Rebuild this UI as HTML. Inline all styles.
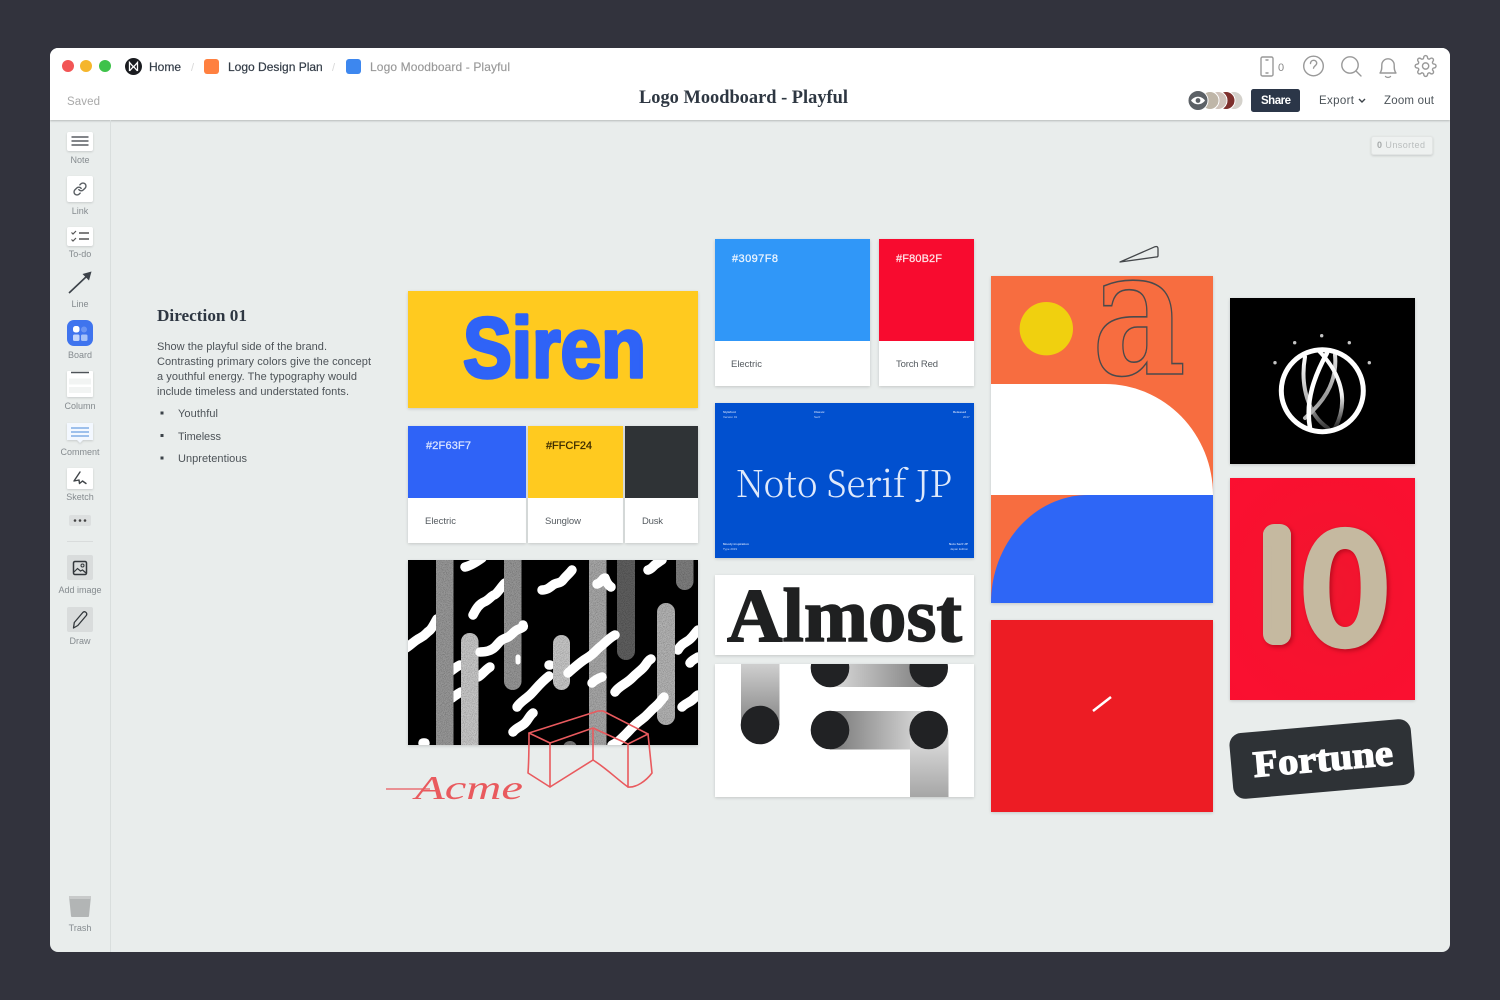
<!DOCTYPE html>
<html lang="en">
<head>
<meta charset="utf-8">
<title>Logo Moodboard - Playful</title>
<style>
html,body{margin:0;padding:0;width:1500px;height:1000px;overflow:hidden;background:#32333d}
#win{position:absolute;left:50px;top:48px;width:1400px;height:904px;background:#e9edec;border-radius:8px;overflow:hidden}
#hdr{position:absolute;left:0;top:0;width:1400px;height:72px;background:#fff;box-shadow:0 1px 2px rgba(0,0,0,.22)}
#side{position:absolute;left:60px;top:72px;width:1px;height:832px;background:#d9dedd}
.c{position:absolute;background:#fff;box-shadow:0 1px 3px rgba(0,0,0,.16)}
svg#art{position:absolute;left:0;top:0;width:1500px;height:1000px}
text{font-family:"Liberation Sans",sans-serif}
.l{font-size:9px;fill:#858b8f;text-anchor:middle}
.b{font-size:11px;fill:#4d5358}
.s{font-size:9.5px;fill:#555b60}
.h{font-size:11px;font-weight:400;stroke-width:.25px}
.ti{font-size:3px;fill:#c8d8f8}
.sc{filter:drop-shadow(0 1px 1px rgba(0,0,0,.14))}
</style>
</head>
<body>
<div id="win"><div id="hdr"></div><div id="side"></div></div>

<div class="c" style="left:408px;top:291px;width:290px;height:117px;background:#ffca1f"></div>
<div class="c" style="left:408px;top:426px;width:118px;height:117px"></div>
<div class="c" style="left:528px;top:426px;width:95px;height:117px"></div>
<div class="c" style="left:625px;top:426px;width:73px;height:117px"></div>
<div class="c" style="left:408px;top:426px;width:118px;height:72px;background:#2f63f7;box-shadow:none"></div>
<div class="c" style="left:528px;top:426px;width:95px;height:72px;background:#ffca1f;box-shadow:none"></div>
<div class="c" style="left:625px;top:426px;width:73px;height:72px;background:#2f3336;box-shadow:none"></div>
<div class="c" style="left:408px;top:560px;width:290px;height:185px;background:#000"></div>

<div class="c" style="left:715px;top:239px;width:155px;height:147px"></div>
<div class="c" style="left:879px;top:239px;width:95px;height:147px"></div>
<div class="c" style="left:715px;top:239px;width:155px;height:102px;background:#3097f8;box-shadow:none"></div>
<div class="c" style="left:879px;top:239px;width:95px;height:102px;background:#f80b2f;box-shadow:none"></div>
<div class="c" style="left:715px;top:403px;width:259px;height:155px;background:#0150cf"></div>
<div class="c" style="left:715px;top:575px;width:259px;height:80px"></div>
<div class="c" style="left:715px;top:664px;width:259px;height:133px"></div>

<div class="c" style="left:991px;top:276px;width:222px;height:327px;background:#f76d40"></div>
<div class="c" style="left:991px;top:620px;width:222px;height:192px;background:#ed1c24"></div>
<div class="c" style="left:1230px;top:298px;width:185px;height:166px;background:#000"></div>
<div class="c" style="left:1230px;top:478px;width:185px;height:222px;background:radial-gradient(ellipse at 55% 50%,#f0162e 0%,#f8112f 60%,#fb0f30 100%)"></div>

<svg id="art" viewBox="0 0 1500 1000" xmlns="http://www.w3.org/2000/svg">
<defs>
<clipPath id="pat"><rect x="408" y="560" width="290" height="185"/></clipPath>
<clipPath id="dots"><rect x="715" y="664" width="259" height="133"/></clipPath>
<clipPath id="one"><rect x="1263" y="524" width="28" height="121" rx="11"/></clipPath>
<filter id="g" x="0" y="0" width="100%" height="100%"><feTurbulence type="fractalNoise" baseFrequency="1.1" numOctaves="2" result="n"/><feColorMatrix in="n" type="matrix" values="0 0 0 0 0 0 0 0 0 0 0 0 0 0 0 1.1 0 0 0 -.42" result="k"/><feComposite in="k" in2="SourceAlpha" operator="in" result="m"/><feMerge><feMergeNode in="SourceGraphic"/><feMergeNode in="m"/></feMerge></filter>
<linearGradient id="gv1" x1="0" y1="0" x2="0" y2="1"><stop offset="0" stop-color="#cfcfcf"/><stop offset="1" stop-color="#858585"/></linearGradient>
<linearGradient id="gh1" x1="0" y1="0" x2="1" y2="0"><stop offset="0" stop-color="#dcdcdc"/><stop offset="1" stop-color="#7c7c7c"/></linearGradient>
<linearGradient id="gh2" x1="0" y1="0" x2="1" y2="0"><stop offset="0" stop-color="#777"/><stop offset="1" stop-color="#e0e0e0"/></linearGradient>
<linearGradient id="gv2" x1="0" y1="0" x2="0" y2="1"><stop offset="0" stop-color="#e2e2e2"/><stop offset="1" stop-color="#a6a6a6"/></linearGradient>
<linearGradient id="lb" gradientUnits="userSpaceOnUse" x1="1305" y1="357" x2="1328" y2="428"><stop offset="0" stop-color="#fff"/><stop offset=".6" stop-color="#aaa"/><stop offset="1" stop-color="#333"/></linearGradient>
<linearGradient id="lc" gradientUnits="userSpaceOnUse" x1="1320" y1="350" x2="1336" y2="428"><stop offset="0" stop-color="#fff"/><stop offset=".6" stop-color="#f2f2f2"/><stop offset="1" stop-color="#222"/></linearGradient>
<linearGradient id="ld" gradientUnits="userSpaceOnUse" x1="1335" y1="355" x2="1305" y2="418"><stop offset="0" stop-color="#ddd"/><stop offset=".6" stop-color="#999"/><stop offset="1" stop-color="#bbb"/></linearGradient>
</defs>

<!-- traffic lights + breadcrumbs -->
<circle cx="68" cy="66" r="6" fill="#f25555"/><circle cx="86" cy="66" r="6" fill="#f5b62c"/><circle cx="105" cy="66" r="6" fill="#3ec24a"/>
<circle cx="133.5" cy="66.5" r="8.5" fill="#1a1c20"/>
<path d="M129.5 71V62.5L133.5 67 137.5 62.5V71M129.5 71 133.5 66.5 137.5 71" fill="none" stroke="#fff" stroke-width="1.3"/>
<text x="149" y="71" font-size="12" fill="#333c47" stroke="#333c47" stroke-width=".2">Home</text>
<text x="191" y="71" font-size="11" fill="#d8d8d8">/</text>
<rect x="204" y="59" width="15" height="15" rx="3" fill="#ff8040"/>
<text x="228" y="71" font-size="12" fill="#333c47" stroke="#333c47" stroke-width=".2">Logo Design Plan</text>
<text x="332" y="71" font-size="11" fill="#d8d8d8">/</text>
<rect x="346" y="59" width="15" height="15" rx="3" fill="#3d87ef"/>
<text x="370" y="71" font-size="12" fill="#999" stroke="#999" stroke-width=".15" textLength="140">Logo Moodboard - Playful</text>
<text x="67" y="105" font-size="11.5" fill="#a9a9a9" textLength="33">Saved</text>
<text x="639" y="103" font-size="19" font-weight="700" fill="#2e3742" style="font-family:'Liberation Serif',serif" textLength="209" lengthAdjust="spacingAndGlyphs">Logo Moodboard - Playful</text>

<!-- top right icons -->
<g fill="none" stroke="#999" stroke-width="1.4" stroke-linecap="round" stroke-linejoin="round">
<rect x="1261" y="57" width="12" height="19" rx="1.5"/><path d="M1266 60h2M1266 73h2"/>
<circle cx="1313.5" cy="66" r="9.8"/>
<path d="M1310.5 63.5c.3-4.4 6.3-4 6.2-.2 0 2.4-3.1 2.6-3.2 4.9"/>
<circle cx="1350" cy="65" r="8.2"/><path d="M1356 71l5 5"/>
<path d="M1380 73c2-2.5 1.8-5 1.8-8a6.2 6.2 0 0 1 12.4 0c0 3-.2 5.5 1.8 8zM1385.5 76.5c1 1.3 4 1.3 5 0"/>
<g transform="translate(1414.2 54.6) scale(.95)" stroke-width="1.47">
<path d="M19.4 15a1.65 1.65 0 0 0 .33 1.82l.06.06a2 2 0 0 1 0 2.83 2 2 0 0 1-2.83 0l-.06-.06a1.65 1.65 0 0 0-1.82-.33 1.65 1.65 0 0 0-1 1.51V21a2 2 0 0 1-2 2 2 2 0 0 1-2-2v-.09A1.65 1.65 0 0 0 9 19.4a1.65 1.65 0 0 0-1.82.33l-.06.06a2 2 0 0 1-2.83 0 2 2 0 0 1 0-2.83l.06-.06a1.65 1.65 0 0 0 .33-1.82 1.65 1.65 0 0 0-1.51-1H3a2 2 0 0 1-2-2 2 2 0 0 1 2-2h.09A1.65 1.65 0 0 0 4.6 9a1.65 1.65 0 0 0-.33-1.82l-.06-.06a2 2 0 0 1 0-2.83 2 2 0 0 1 2.83 0l.06.06a1.65 1.65 0 0 0 1.82.33H9a1.65 1.65 0 0 0 1-1.51V3a2 2 0 0 1 2-2 2 2 0 0 1 2 2v.09a1.65 1.65 0 0 0 1 1.51 1.65 1.65 0 0 0 1.82-.33l.06-.06a2 2 0 0 1 2.83 0 2 2 0 0 1 0 2.83l-.06.06a1.65 1.65 0 0 0-.33 1.82V9a1.65 1.65 0 0 0 1.51 1H21a2 2 0 0 1 2 2 2 2 0 0 1-2 2h-.09a1.65 1.65 0 0 0-1.51 1z"/>
<circle cx="12" cy="12" r="3.3"/>
</g>
</g>
<text x="1278" y="71" font-size="11" fill="#888">0</text>

<!-- avatars -->
<circle cx="1234" cy="100.5" r="9" fill="#d4d1cb" stroke="#fff"/><path d="M1230 92.5a9 9 0 0 0 0 16l3-8z" fill="#2c2a28"/>
<circle cx="1226" cy="100.5" r="9" fill="#7d2f2c" stroke="#fff"/>
<circle cx="1218" cy="100.5" r="9" fill="#cfc2ba" stroke="#fff"/>
<circle cx="1210" cy="100.5" r="9" fill="#bfb6a8" stroke="#fff"/>
<circle cx="1198" cy="100.5" r="10" fill="#5c6166" stroke="#fff"/>
<path d="M1191 100.5c3.5-5 10.5-5 14 0-3.5 5-10.5 5-14 0z" fill="#fff"/><circle cx="1198" cy="100.5" r="2.4" fill="#5c6166"/>

<rect x="1251" y="89" width="49" height="23" rx="2.5" fill="#2b3648"/>
<text x="1261" y="104" font-size="11.5" font-weight="700" fill="#fff" textLength="30">Share</text>
<text x="1319" y="104" font-size="11.5" fill="#4c5359" textLength="35">Export</text>
<path d="M1359 99l3 3 3-3" fill="none" stroke="#3c4349" stroke-width="1.4"/>
<text x="1384" y="104" font-size="11.5" fill="#4c5359" textLength="50">Zoom out</text>

<rect class="sc" x="1371.5" y="136.5" width="61" height="18" rx="2" fill="#eef1f0" stroke="#e2e5e4"/>
<text x="1377" y="148" font-size="9" fill="#b9bdbd" textLength="48"><tspan font-weight="700" fill="#a5a9a9">0</tspan> Unsorted</text>

<!-- sidebar -->
<rect class="sc" x="67" y="132" width="26" height="19" rx="2" fill="#fff"/>
<path d="M71.5 137h17M71.5 141h17M71.5 145h17" stroke="#585d62" stroke-width="1.5"/>
<text class="l" x="80" y="163">Note</text>
<rect class="sc" x="67" y="176" width="26" height="26" rx="2" fill="#fff"/>
<g transform="translate(72.8 181.8) scale(.6)" fill="none" stroke="#585d62" stroke-width="2.3" stroke-linecap="round" stroke-linejoin="round"><path d="M10 13a5 5 0 0 0 7.54.54l3-3a5 5 0 0 0-7.07-7.07l-1.72 1.71"/><path d="M14 11a5 5 0 0 0-7.54-.54l-3 3a5 5 0 0 0 7.07 7.07l1.71-1.71"/></g>
<text class="l" x="80" y="214">Link</text>
<rect class="sc" x="67" y="227" width="26" height="19" rx="2" fill="#fff"/>
<path d="M71.5 232.5l1.5 1.5 3-3M71.5 239.5l1.5 1.5 3-3" fill="none" stroke="#555" stroke-width="1.2"/>
<path d="M79 233h10M79 239h10" stroke="#555" stroke-width="1.5"/>
<text class="l" x="80" y="257">To-do</text>
<path d="M69 293l18-17" stroke="#3c4249" stroke-width="1.6"/>
<path d="M91.5 271.5l-2.5 9-6.5-6.5z" fill="#3c4249"/>
<text class="l" x="80" y="307">Line</text>
<rect x="67" y="320" width="26" height="26" rx="7" fill="#3f74ee"/>
<rect x="73" y="326" width="6.5" height="6.5" rx="2.5" fill="#fff"/>
<circle cx="84" cy="329.5" r="3" fill="#6c95f3"/>
<rect x="73" y="334.5" width="6.5" height="6.5" rx="1.5" fill="#c3d5fb"/>
<rect x="81" y="334.5" width="6.5" height="6.5" rx="1.5" fill="#a6c1f8"/>
<text class="l" x="80" y="358">Board</text>
<rect class="sc" x="67" y="371" width="26" height="26" rx="1" fill="#fff"/>
<path d="M71 372.5h18" stroke="#4e5358" stroke-width="1.5"/>
<path d="M69 378.5h22v6H69zM69 387h22v6H69z" fill="#f2f4f3"/>
<text class="l" x="80" y="409">Column</text>
<path class="sc" d="M67 423h26v17H83l-3 3-3-3H67z" fill="#f3f8ff"/>
<path d="M71 428h18M71 432h18M71 436h18" stroke="#6a9fe0" stroke-width="1.2"/>
<text class="l" x="80" y="455">Comment</text>
<rect class="sc" x="67" y="468" width="26" height="21" rx="1" fill="#fff"/>
<path d="M80 472l-6 9 5-1 .5 3.5 3-2.5 3.5 2.5" fill="none" stroke="#3f4448" stroke-width="1.4" stroke-linejoin="round" stroke-linecap="round"/>
<text class="l" x="80" y="500">Sketch</text>
<rect x="69" y="515" width="22" height="11" rx="2" fill="#dcdfdf"/>
<circle cx="75" cy="520.5" r="1.3" fill="#444"/><circle cx="80" cy="520.5" r="1.3" fill="#444"/><circle cx="85" cy="520.5" r="1.3" fill="#444"/>
<path d="M67 541.5h26" stroke="#d9dcdc"/>
<rect x="67" y="555" width="26" height="25" rx="2" fill="#d9dcdc"/>
<rect x="73.5" y="561.5" width="13" height="13" rx="1.5" fill="none" stroke="#32373b" stroke-width="1.5"/>
<circle cx="82.5" cy="565.5" r="1.5" fill="none" stroke="#32373b"/>
<path d="M74 572l3.5-3.5 3 2.5 2-1 3.5 3" fill="none" stroke="#32373b" stroke-width="1.2"/>
<text class="l" x="80" y="593">Add image</text>
<rect x="67" y="607" width="26" height="25" rx="2" fill="#d9dcdc"/>
<path d="M73.5 628l.8-5.5 8.5-10c2-2 5 .5 3.5 3l-8.5 10z" fill="none" stroke="#32373b" stroke-width="1.3" stroke-linejoin="round"/>
<text class="l" x="80" y="644">Draw</text>
<path d="M69 896h22l-2 20c-.1.8-.6 1-1 1H72c-.4 0-.9-.2-1-1z" fill="#b2b5b5"/>
<rect x="69" y="896" width="22" height="3" fill="#c8caca"/>
<text class="l" x="80" y="931">Trash</text>

<!-- direction text -->
<text x="157" y="321" font-size="17" font-weight="700" fill="#2e3742" style="font-family:'Liberation Serif',serif" textLength="90" lengthAdjust="spacingAndGlyphs">Direction 01</text>
<text class="b" x="157" y="350" textLength="170">Show the playful side of the brand.</text>
<text class="b" x="157" y="365" textLength="214">Contrasting primary colors give the concept</text>
<text class="b" x="157" y="380" textLength="200">a youthful energy. The typography would</text>
<text class="b" x="157" y="395" textLength="192">include timeless and understated fonts.</text>
<rect x="160.5" y="411.5" width="3" height="3" fill="#3c4249"/>
<rect x="160.5" y="434" width="3" height="3" fill="#3c4249"/>
<rect x="160.5" y="456.5" width="3" height="3" fill="#3c4249"/>
<text class="b" x="178" y="417" textLength="40">Youthful</text>
<text class="b" x="178" y="440" textLength="43">Timeless</text>
<text class="b" x="178" y="462" textLength="69">Unpretentious</text>

<!-- siren -->
<text x="463" y="377" font-size="85" font-weight="700" fill="#2f63f7" stroke="#2f63f7" stroke-width="3.5" stroke-linejoin="round" textLength="183" lengthAdjust="spacingAndGlyphs">Siren</text>
<text class="h" x="426" y="449" fill="#dbe5ff" stroke="#dbe5ff" textLength="45">#2F63F7</text>
<text class="h" x="546" y="449" fill="#3a2a00" stroke="#3a2a00" textLength="46">#FFCF24</text>
<text class="s" x="425" y="524" textLength="31">Electric</text>
<text class="s" x="545" y="524" textLength="36">Sunglow</text>
<text class="s" x="642" y="524" textLength="21">Dusk</text>

<!-- pattern -->
<g clip-path="url(#pat)" fill="none" stroke-linecap="round" stroke-linejoin="round">
<g stroke="#fff" stroke-width="9.5">
<path d="M465 567C470 566 475 563 482 558"/>
<path d="M473 615c3-6 6-11 11-13s7-6 10-7 7-8 11-12"/>
<path d="M406 648c5-3 8-7 14-10s6-5 9-7 5-7 8-12"/>
<path d="M542 590c5 0 7-2 11-5s7-1 10-5 6-6 9-10"/>
<path d="M648 570c4-1 5-4 8-6s4-3 6-4"/>
<path d="M448 673c4-2 6-5 12-8"/>
<path d="M478 677c4-2 7-7 12-10"/>
<path d="M452 698c3-2 5-4 9-6"/>
<path d="M517 707c3-5 9-8 14-13s9-11 18-18"/>
<path d="M549 665l1 0"/>
<path d="M615 692c4-6 11-8 17-14s7-6 11-10 4-7 8-9"/>
<path d="M513 732c4-5 8-5 12-9s4-7 8-10"/>
<path d="M678 650c3-6 7-7 11-10s5-6 9-10"/>
<path d="M690 663c2-3 5-4 8-6"/>
<path d="M682 707c3-3 6-4 9-6s4-4 7-6"/>
<path d="M423 743l2 0"/>
</g>
<g filter="url(#g)" stroke="none">
<rect x="436" y="540" width="17.5" height="220" fill="#979797"/>
<rect x="461" y="633" width="17.5" height="130" rx="8.7" fill="#c6c6c6"/>
<rect x="504" y="530" width="17.5" height="160" rx="8.7" fill="#959595"/>
<rect x="553" y="635" width="17" height="55" rx="8.5" fill="#c6c6c6"/>
<rect x="589" y="540" width="17.5" height="220" fill="#a6a6a6"/>
<rect x="617" y="530" width="18" height="130" rx="9" fill="#5e5e5e"/>
<rect x="657" y="603" width="18" height="122" rx="9" fill="#b2b2b2"/>
<rect x="676" y="530" width="17.5" height="60" rx="8.7" fill="#7e7e7e"/>
<rect x="563" y="741" width="14" height="14" rx="7" fill="#777"/>
</g>
<g stroke="#fff" stroke-width="9.5">
<path d="M480 652c5 0 11-1 15-5s5-7 11-9 7-7 13-9 4-3 4-4"/>
<path d="M568 673c6-5 12-11 19-15s9-8 13-11 9-9 15-12"/>
<path d="M597 584c4-1 6-6 8-6 1 3 3 7 6 9"/>
<path d="M592 683c3-3 7-5 10-6"/>
<path d="M518 662v-5" stroke-width="5"/>
<path d="M612 745c5-2 9-6 14-11s8-9 15-14 8-8 14-13 6-7 9-10"/>
</g>
</g>

<!-- red sketch -->
<g fill="none" stroke="#e95a5e" stroke-width="1.6" stroke-linejoin="round" stroke-linecap="round">
<path d="M529 733L598 711 603 711 648 734 628 744 593 728 550 743Z"/>
<path d="M529 733C529 747 529 760 528 773L550 787V743"/>
<path d="M550 787L593 760V728"/>
<path d="M593 760C606 768 618 780 628 787V744"/>
<path d="M628 787C636 788 646 781 652 773L648 734"/>
</g>
<path d="M386 789h44" stroke="#e95a5e" stroke-width="1.2"/>
<text x="415" y="799" font-size="34" font-style="italic" fill="#e95a5e" style="font-family:'Liberation Serif',serif" textLength="108" lengthAdjust="spacingAndGlyphs">Acme</text>

<!-- col 2 text -->
<text class="h" x="732" y="262" fill="#eef6ff" stroke="#eef6ff" textLength="46">#3097F8</text>
<text class="h" x="896" y="262" fill="#ffe3e7" stroke="#ffe3e7" textLength="46">#F80B2F</text>
<text class="s" x="731" y="367" textLength="31">Electric</text>
<text class="s" x="896" y="367" textLength="42">Torch Red</text>

<text x="736" y="497" font-size="37" fill="#dfe9fb" style="font-family:'Noto Serif CJK JP','Liberation Serif',serif;font-weight:300" textLength="216" lengthAdjust="spacingAndGlyphs">Noto Serif JP</text>
<text class="ti" x="723" y="413" font-weight="700">Stylefont</text><text class="ti" x="723" y="418">Version 01</text>
<text class="ti" x="814" y="413" font-weight="700">Classic</text><text class="ti" x="814" y="418">Serif</text>
<text class="ti" x="953" y="413" font-weight="700">Released</text><text class="ti" x="963" y="418">2017</text>
<text class="ti" x="723" y="545" font-weight="700">Moody inspiration</text><text class="ti" x="723" y="550">Type 2019</text>
<text class="ti" x="949" y="545" font-weight="700">Noto Serif JP</text><text class="ti" x="950" y="550">Japan Edition</text>

<!-- almost -->
<text x="727" y="641" font-size="76" font-weight="700" fill="#1f2021" stroke="#1f2021" stroke-width="1.5" style="font-family:'Liberation Serif',serif" textLength="235" lengthAdjust="spacingAndGlyphs">Almost</text>

<!-- dots -->
<g clip-path="url(#dots)">
<rect x="741" y="664" width="38.5" height="61" fill="url(#gv1)"/>
<rect x="830" y="664" width="99" height="23" fill="url(#gh1)"/>
<rect x="830" y="711" width="99" height="38.5" fill="url(#gh2)"/>
<rect x="910" y="730" width="38.5" height="67" fill="url(#gv2)"/>
<g fill="#212224">
<circle cx="760" cy="725" r="19.3"/><circle cx="830" cy="730" r="19.3"/><circle cx="928.7" cy="730" r="19.3"/>
<circle cx="830" cy="668" r="19.3"/><circle cx="928.7" cy="668" r="19.3"/>
</g>
</g>

<!-- orange card -->
<circle cx="1046.3" cy="328.7" r="26.7" fill="#f0d00f"/>
<path d="M991 384H1105A108 111 0 0 1 1213 495H991Z" fill="#fff"/>
<path d="M991 603A97 108 0 0 1 1088 495H1213V603Z" fill="#2e66f6"/>
<path d="M1120 262l35-15.3c2-.7 3 .3 3 2l0 7c0 1-1 1.3-2 1.3z" fill="none" stroke="#44474a" stroke-width="1.3" stroke-linejoin="round"/>
<text x="1092" y="374" font-size="176" font-weight="700" fill="none" stroke="#4a4a4c" stroke-width="1.6" style="font-family:'DejaVu Serif',serif" textLength="94" lengthAdjust="spacingAndGlyphs">a</text>

<!-- tick -->
<path d="M1093 711l18-14" stroke="#fff" stroke-width="2.5"/>

<!-- black logo -->
<g fill="#c4c4c4"><circle cx="1275" cy="362.7" r="1.7"/><circle cx="1294.7" cy="342.7" r="1.7"/><circle cx="1321.7" cy="335.7" r="1.7"/><circle cx="1349.3" cy="342.7" r="1.7"/><circle cx="1369.3" cy="362.7" r="1.7"/></g>
<g fill="none" stroke-linecap="round">
<path d="M1305 357C1300 385 1308 415 1328 428" stroke="url(#lb)" stroke-width="4"/>
<path d="M1335 355C1338 385 1320 405 1305 418" stroke="url(#ld)" stroke-width="4"/>
<path d="M1318 350C1340 372 1350 400 1335 428" stroke="url(#lc)" stroke-width="4"/>
<path d="M1310 428C1305 400 1315 375 1327 353" stroke="#fff" stroke-width="4.5"/>
<circle cx="1322.3" cy="390.7" r="41" stroke="#fff" stroke-width="5"/>
</g>

<!-- ten -->
<g style="filter:drop-shadow(2px 2px 2px rgba(120,0,10,.45))">
<g clip-path="url(#one)"><text x="1227" y="645" font-size="166" font-weight="700" fill="#c5b9a0" stroke="#c5b9a0" stroke-width="9" style="font-family:'Noto Sans CJK JP','Liberation Sans',sans-serif">1</text></g>
<text x="1298.5" y="645" font-size="158" font-weight="700" fill="#c5b9a0" stroke="#c5b9a0" stroke-width="4" stroke-linejoin="round" style="font-family:'Noto Sans CJK JP','Liberation Sans',sans-serif">0</text>
</g>

<!-- fortune -->
<g transform="rotate(-5 1322 759)">
<rect x="1231" y="726" width="182" height="66" rx="12" fill="#2e3236"/>
<text x="1253" y="771" font-size="37" font-weight="700" fill="#fff" stroke="#fff" stroke-width="1.3" style="font-family:'Liberation Serif',serif" textLength="140" lengthAdjust="spacingAndGlyphs">Fortune</text>
</g>
</svg>
</body>
</html>
